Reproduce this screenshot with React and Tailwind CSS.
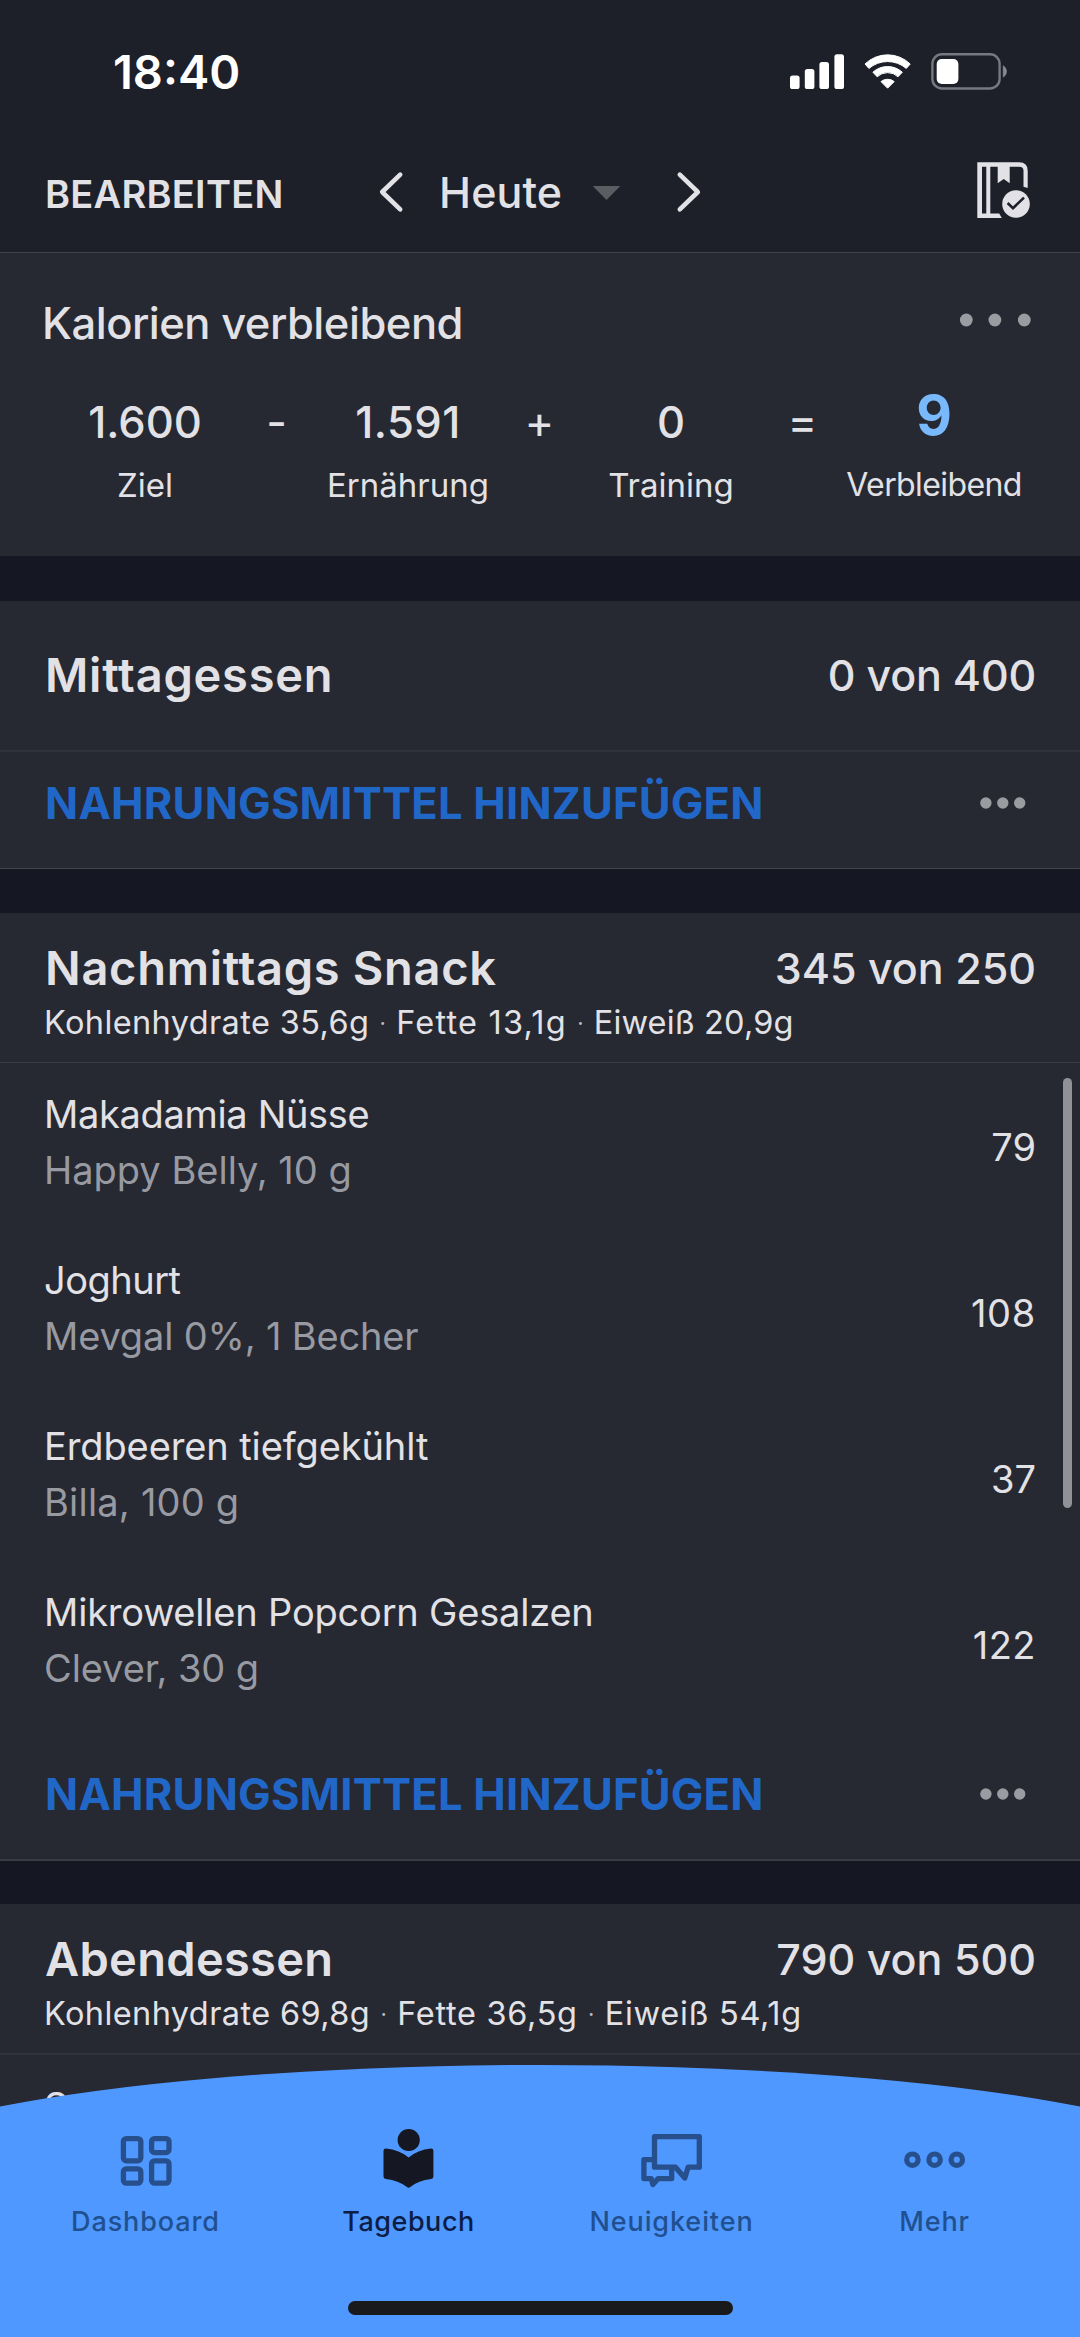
const MEALS = [
  { title: 'Mittagessen', total: '0 von 400', items: [], titleClass: 'font-semibold tracking-[0.76px]', totalClass: 'tracking-[-0.2px]' },
  {
    title: 'Nachmittags Snack',
    total: '345 von 250',
    titleClass: 'font-semibold tracking-[0.7px]',
    macros: [
      ['Kohlenhydrate 35,6g', 'tracking-[0.38px]'],
      ['Fette 13,1g', 'tracking-[1.2px]'],
      ['Eiweiß 20,9g', 'tracking-[0.13px]'],
    ],
    items: [
      { name: 'Makadamia Nüsse', detail: 'Happy Belly, 10 g', kcal: '79', nameClass: 'tracking-[-0.33px]', detailClass: '', kcalClass: '' },
      { name: 'Joghurt', detail: 'Mevgal 0%, 1 Becher', kcal: '108', nameClass: 'tracking-[-0.5px]', detailClass: 'tracking-[-0.17px]', kcalClass: 'tracking-[0.7px]' },
      { name: 'Erdbeeren tiefgekühlt', detail: 'Billa, 100 g', kcal: '37', nameClass: 'tracking-[-0.11px]', detailClass: 'tracking-[0.21px]', kcalClass: '' },
      { name: 'Mikrowellen Popcorn Gesalzen', detail: 'Clever, 30 g', kcal: '122', nameClass: 'tracking-[-0.2px]', detailClass: 'tracking-[-0.09px]', kcalClass: 'tracking-[0.5px]' },
    ],
  },
];

function SignalIcon() {
  return (
    <svg width="54" height="36" viewBox="790 54 54 36" fill="#fff">
      <rect x="790" y="75.5" width="9.6" height="13.5" rx="2.6" />
      <rect x="804.8" y="69" width="9.6" height="20" rx="2.6" />
      <rect x="819.4" y="62" width="9.6" height="27" rx="2.6" />
      <rect x="834.4" y="54.3" width="9.6" height="34.7" rx="2.6" />
    </svg>
  );
}

function WifiIcon() {
  return (
    <svg width="48" height="36" viewBox="864 54 48 36" fill="#fff" stroke="#fff" strokeWidth="1" strokeLinejoin="round">
      <path d="M865 64A32.5 32.5 0 0 1 910.2 64L906.3 68.4A29 29 0 0 0 868.9 68.4Z" />
      <path d="M872.9 72.2A22 22 0 0 1 902.3 72.2L898 76.8A15 15 0 0 0 877.2 76.8Z" />
      <path d="M881 81.6A10.5 10.5 0 0 1 894.2 81.6L887.6 88.2Z" />
    </svg>
  );
}

function BatteryIcon() {
  return (
    <svg width="77" height="38" viewBox="931 53 77 38">
      <rect x="932.4" y="54.3" width="67.2" height="34.2" rx="9.5" fill="none" stroke="#777881" strokeWidth="2.4" />
      <rect x="936.7" y="59" width="21.7" height="25" rx="5" fill="#fff" />
      <path d="M1003.2 65.8A6.6 6.6 0 0 1 1003.2 77.2Z" fill="#8a8b92" stroke="#8a8b92" strokeWidth=".6" />
    </svg>
  );
}

function Chevron({ flip }) {
  return (
    <svg width="26" height="42" viewBox="0 0 26 42" className={flip ? 'rotate-180' : ''} fill="none" stroke="#e2e2e6" strokeWidth="4.6" strokeLinecap="round" strokeLinejoin="round">
      <path d="M22.2 3.6L4.2 21L22.2 38.4" />
    </svg>
  );
}

function DiaryCompleteIcon() {
  return (
    <svg width="54" height="57" viewBox="977 162 54 57" fill="#e2e2e6">
      <path fillRule="evenodd" d="M977.3 162.3H1019.2Q1027.7 162.3 1027.7 170.8V188L1023.5 186.8V171Q1023.5 166.8 1019.2 166.8H1009.7V183.2L1003.7 179L997.7 183.2V166.8H990.3V213.4H999.2L1001.8 218H977.3ZM982 166.8V213.4H986.3V166.8Z" />
      <circle cx="1016" cy="204" r="13.8" />
      <path d="M1007.6 203L1013 208.2L1024 197.6" fill="none" stroke="#1d1f29" strokeWidth="2.6" />
    </svg>
  );
}

function MoreDots() {
  return (
    <svg width="46" height="12" viewBox="979.5 0 46 12" fill="#9b9ca2">
      <circle cx="985.4" cy="6" r="5.7" />
      <circle cx="1002.3" cy="6" r="5.7" />
      <circle cx="1019.2" cy="6" r="5.7" />
    </svg>
  );
}

function DashboardIcon() {
  return (
    <svg width="70" height="70" viewBox="110.5 2125 70 70" fill="none" stroke="#264f8c" strokeWidth="5.3">
      <rect x="122.9" y="2138.6" width="17.4" height="22.2" rx="3" />
      <rect x="151.1" y="2138.6" width="17.4" height="14" rx="3" />
      <rect x="122.9" y="2168.8" width="17.4" height="14.4" rx="3" />
      <rect x="151.1" y="2160.8" width="17.4" height="22.4" rx="3" />
    </svg>
  );
}

function DiaryIcon() {
  return (
    <svg width="70" height="70" viewBox="373.5 2125 70 70" fill="#151722">
      <circle cx="408.2" cy="2140" r="11.1" />
      <path d="M383 2150.8Q383 2148.4 385.6 2148.5Q399 2149.8 408.1 2157.5Q417.2 2149.8 430.4 2148.5Q432.9 2148.4 432.9 2150.8V2176.4Q432.9 2178.7 430.6 2179Q418 2180.4 409.8 2187Q408.1 2188.3 406.4 2187Q398 2180.4 385.4 2179Q383 2178.7 383 2176.4Z" />
    </svg>
  );
}

function NewsIcon() {
  return (
    <svg width="70" height="70" viewBox="636.5 2125 70 70" fill="none" stroke="#264f8c" strokeWidth="5.3" strokeLinejoin="round">
      <path d="M654 2136.6H698.8V2167.2H687.6L684.3 2178L675 2167.2H654Z" />
      <path d="M654 2159.6H643.4V2178.6H650.8L652.4 2184.6L657.6 2178.6H671.2V2168" />
    </svg>
  );
}

function MoreIcon() {
  return (
    <svg width="70" height="70" viewBox="899.5 2125 70 70" fill="none" stroke="#264f8c" strokeWidth="5.2">
      <circle cx="911.9" cy="2159.7" r="5.7" />
      <circle cx="934.1" cy="2159.7" r="5.7" />
      <circle cx="956.3" cy="2159.7" r="5.7" />
    </svg>
  );
}

function SummaryValue({ value, label, valueClass = '' }) {
  return (
    <div className="flex w-[200px] flex-col items-center whitespace-nowrap">
      <span className={`mb-[15px] text-[43.5px] leading-[56px] font-medium ${valueClass}`}>{value}</span>
      <span className="text-[33px] leading-[40px]">{label}</span>
    </div>
  );
}

function Operator({ children }) {
  return <span className="w-[63px] text-center text-[45px] leading-[56px]">{children}</span>;
}

function MealHeader({ title, total, macros, titleClass, totalClass = '' }) {
  return (
    <div className={`flex h-[149px] flex-col pr-[44px] pl-[45px] whitespace-nowrap ${macros ? 'pt-[27px]' : 'pt-[46px]'}`}>
      <div className="flex items-center justify-between leading-[56px]">
        <h2 className={`text-[47px] ${titleClass}`}>{title}</h2>
        <span className={`text-[43px] font-medium ${totalClass}`}>{total}</span>
      </div>
      {macros && (
        <div className="-ml-px mt-[7px] flex text-[32.5px] leading-[40px]">
          {macros.map(([text, spacing], i) => (
            <div key={text} className="flex">
              {i > 0 && <span className="w-[27px] text-center text-[22px] text-[#b9bac0]">·</span>}
              <span className={spacing}>{text}</span>
            </div>
          ))}
        </div>
      )}
    </div>
  );
}

function FoodRow({ name, detail, kcal, nameClass = '', detailClass = '', kcalClass = '' }) {
  return (
    <div className="flex h-[166px] justify-between pt-[23px] pr-[44px] pl-[44px] text-[38px] leading-[56px] whitespace-nowrap">
      <div>
        <div className={nameClass}>{name}</div>
        <div className={`text-[#989aa2] ${detailClass}`}>{detail}</div>
      </div>
      <span className={`pt-[33px] ${kcalClass}`}>{kcal}</span>
    </div>
  );
}

function AddFood({ className }) {
  return (
    <div className={`flex items-center justify-between pr-[54px] pl-[45px] ${className}`}>
      <span className="text-[43.5px] leading-[56px] font-bold tracking-[0.22px] whitespace-nowrap text-[#2167c8]">NAHRUNGSMITTEL HINZUFÜGEN</span>
      <MoreDots />
    </div>
  );
}

function NavItem({ icon, label, active, className = '' }) {
  return (
    <div className="flex flex-col items-center">
      {icon}
      <span className={`mt-[9px] text-[27px] leading-[36px] font-medium ${active ? 'text-[#0c1d45]' : 'text-[#20508f]'} ${className}`}>{label}</span>
    </div>
  );
}

export default function App() {
  return (
    <div className="relative h-[2337px] w-[1080px] overflow-hidden bg-[#151722] font-['Inter',sans-serif] text-[#e2e2e6]">
      <header className="border-b border-[#41434c] bg-[#1d1f29]">
        <div className="flex h-[133px] items-center pt-[11px] pl-[113px] text-white">
          <span className="w-[677px] text-[47px] leading-[56px] font-semibold">18:40</span>
          <SignalIcon />
          <div className="ml-[20px]"><WifiIcon /></div>
          <div className="ml-[19px]"><BatteryIcon /></div>
        </div>
        <div className="flex h-[119px] items-center pr-[49px] pl-[45px] whitespace-nowrap">
          <span className="w-[333px] pt-[3px] text-[38px] leading-[48px] font-semibold tracking-[0.26px]">BEARBEITEN</span>
          <div className="-mt-[2px]"><Chevron /></div>
          <span className="-mt-[2px] ml-[35px] w-[124px] text-[43px] leading-[56px] font-medium tracking-[0.11px]">Heute</span>
          <svg className="ml-[29px]" width="29" height="14" viewBox="0 0 29 14"><path d="M.7 0H28.3L14.5 14Z" fill="#5b5d62" /></svg>
          <div className="-mt-[2px] ml-[55px]"><Chevron flip /></div>
          <div className="-mt-[5px] ml-auto"><DiaryCompleteIcon /></div>
        </div>
      </header>

      <section className="h-[303px] bg-[#262832] pt-[42px]">
        <div className="flex items-center justify-between pr-[48px] pl-[42px]">
          <h1 className="text-[43.5px] leading-[56px] font-medium tracking-[-0.48px]">Kalorien verbleibend</h1>
          <svg className="-mt-[6px]" width="73" height="14" viewBox="959 0 73 14" fill="#9b9ca2">
            <circle cx="966.3" cy="7" r="6.4" />
            <circle cx="994.9" cy="7" r="6.4" />
            <circle cx="1024.3" cy="7" r="6.4" />
          </svg>
        </div>
        <div className="mt-[43px] flex pl-[45px]">
          <SummaryValue value="1.600" label="Ziel" />
          <Operator>-</Operator>
          <SummaryValue value="1.591" label="Ernährung" valueClass="tracking-[0.5px]" />
          <Operator>+</Operator>
          <SummaryValue value="0" label="Training" />
          <Operator>=</Operator>
          <div className="flex w-[200px] flex-col items-center">
            <span className="mb-[28px] text-[55px] leading-[43px] font-bold text-[#78b8fb]">9</span>
            <span className="text-[32px] leading-[40px] tracking-[-0.6px]">Verbleibend</span>
          </div>
        </div>
      </section>

      <section className="mt-[45px] bg-[#262832]">
        <MealHeader {...MEALS[0]} />
        <div className="h-[2px] bg-[#30323b]" />
        <AddFood className="h-[116px] pb-[14px]" />
        <div className="h-px bg-[#42444d]" />
      </section>

      <section className="relative mt-[44px] bg-[#262832]">
        <MealHeader {...MEALS[1]} />
        <div className="h-px bg-[#3a3c45]" />
        {MEALS[1].items.map((item) => <FoodRow key={item.name} {...item} />)}
        <AddFood className="h-[132px] pt-[2px]" />
        <div className="h-[2px] bg-[#393b44]" />
        <div className="absolute top-[165px] right-[8px] h-[430px] w-[9px] rounded-full bg-[#919298]" />
      </section>

      <section className="mt-[43px] bg-[#262832]">
        <MealHeader
          title="Abendessen"
          total="790 von 500"
          titleClass="font-semibold tracking-[0.3px]"
          macros={[
            ['Kohlenhydrate 69,8g', 'tracking-[0.4px]'],
            ['Fette 36,5g', 'tracking-[0.7px]'],
            ['Eiweiß 54,1g', 'tracking-[0.7px]'],
          ]}
        />
        <div className="h-[2px] bg-[#30323b]" />
        <FoodRow name="Schinken" />
        <div className="h-[120px]" />
      </section>

      <nav className="absolute bottom-0 left-0 h-[272px] w-full overflow-hidden">
        <div className="absolute top-0 -left-[160px] h-[400px] w-[1400px] bg-[#4f98ff] [border-top-left-radius:700px_114px] [border-top-right-radius:700px_114px]" />
        <div className="relative grid grid-cols-4 px-[14px] pt-[60px]">
          <NavItem icon={<DashboardIcon />} label="Dashboard" className="tracking-[0.9px]" />
          <NavItem icon={<DiaryIcon />} label="Tagebuch" active className="tracking-[0.53px]" />
          <NavItem icon={<NewsIcon />} label="Neuigkeiten" className="tracking-[0.9px]" />
          <NavItem icon={<MoreIcon />} label="Mehr" className="tracking-[0.89px]" />
        </div>
        <div className="relative mx-auto mt-[61px] h-[14px] w-[385px] rounded-full bg-[#181a1b]" />
      </nav>
    </div>
  );
}
